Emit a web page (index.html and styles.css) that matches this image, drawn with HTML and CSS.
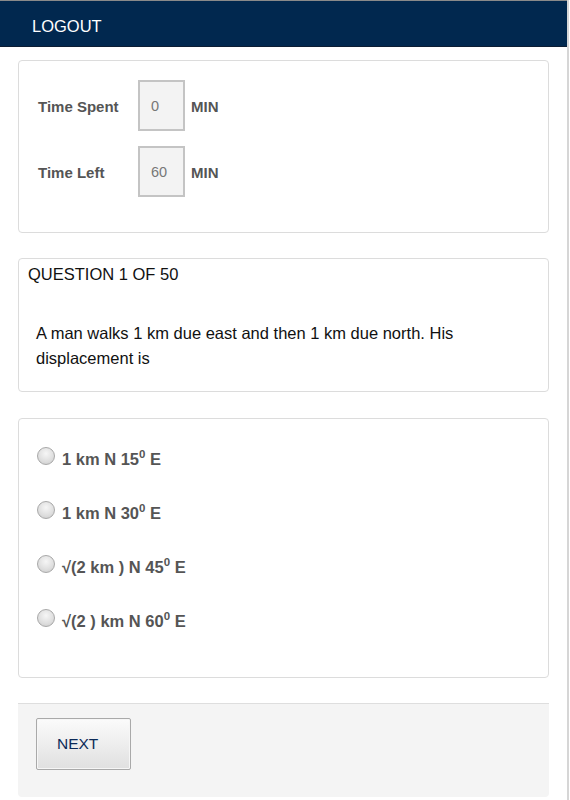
FILE: index.html
```html
<!DOCTYPE html>
<html>
<head>
<meta charset="utf-8">
<link rel="stylesheet" href="styles.css">
</head>
<body>
<div class="page">
  <header class="topbar">LOGOUT</header>

  <section class="card timer">
    <div class="timer-row">
      <span class="timer-label">Time Spent</span>
      <span class="timer-box">0</span>
      <span class="timer-unit">MIN</span>
    </div>
    <div class="timer-row">
      <span class="timer-label">Time Left</span>
      <span class="timer-box">60</span>
      <span class="timer-unit">MIN</span>
    </div>
  </section>

  <section class="card question">
    <div class="q-head">QUESTION 1 OF 50</div>
    <p class="q-text">A man walks 1 km due east and then 1 km due north. His displacement is</p>
  </section>

  <section class="card options">
    <label class="option"><input type="radio" name="ans" class="radio"><span>1 km N 15<sup>0</sup> E</span></label>
    <label class="option"><input type="radio" name="ans" class="radio"><span>1 km N 30<sup>0</sup> E</span></label>
    <label class="option"><input type="radio" name="ans" class="radio"><span>√(2 km ) N 45<sup>0</sup> E</span></label>
    <label class="option"><input type="radio" name="ans" class="radio"><span>√(2 ) km N 60<sup>0</sup> E</span></label>
  </section>

  <footer class="card-footer">
    <button class="next-btn">NEXT</button>
  </footer>
</div>
</body>
</html>
```

FILE: styles.css
```css
html, body {
  margin: 0;
  padding: 0;
  background: #fff;
}

body {
  font-family: "Liberation Sans", Arial, sans-serif;
  width: 570px;
}

.page {
  width: 567px;
  min-height: 800px;
  border-right: 2px solid #d6d6d6;
  box-sizing: content-box;
}

.topbar {
  background: #01284f;
  color: #fff;
  font-size: 16.5px;
  height: 45px;
  line-height: 50px;
  border-top: 1px solid #8a8a8a;
  padding-left: 32px;
  border-bottom: 1px solid #0c1d33;
}

.card {
  margin: 0 18px;
  border: 1px solid #dcdcdc;
  border-radius: 4px;
  background: #fff;
}

.timer {
  margin-top: 13px;
  padding: 19px 19px 34px;
  display: flex;
  flex-direction: column;
  gap: 15px;
  height: 118px;
}

.timer-row {
  display: flex;
  align-items: center;
}

.timer-label {
  width: 100px;
  font-size: 15px;
  font-weight: bold;
  color: #555;
  padding-top: 2px;
}

.timer-box {
  width: 47px;
  height: 51px;
  box-sizing: border-box;
  border: 2px solid #c4c4c4;
  background: #f3f3f3;
  color: #777;
  font-size: 14.5px;
  line-height: 49px;
  padding-left: 11px;
}

.timer-unit {
  margin-left: 6px;
  font-size: 15px;
  font-weight: bold;
  color: #555;
  padding-top: 2px;
}

.question {
  margin-top: 25px;
  padding: 5px 17px 21px 9px;
  height: 106px;
}

.q-head {
  font-size: 16.5px;
  line-height: 20px;
  color: #111;
}

.q-text {
  margin: 37px 0 0 8px;
  font-size: 16.5px;
  line-height: 25px;
  color: #111;
}

.options {
  margin-top: 26px;
  padding: 28px 18px 0;
  height: 230px;
  display: flex;
  flex-direction: column;
  gap: 30px;
}

.option {
  display: flex;
  align-items: center;
  height: 24px;
  font-size: 16.5px;
  font-weight: bold;
  color: #555;
}

.option sup {
  font-size: 11.5px;
  line-height: 0;
  vertical-align: 7px;
}

.radio {
  appearance: none;
  -webkit-appearance: none;
  margin: 0 7px 6px 0;
  width: 18px;
  height: 18px;
  border-radius: 50%;
  border: 1px solid #a8a8a8;
  background: radial-gradient(circle at 50% 35%, #f6f6f6 0%, #dedede 60%, #c8c8c8 100%);
  box-sizing: border-box;
  flex: none;
}

.card-footer {
  margin: 25px 18px 0;
  border-top: 1px solid #dedede;
  background: #f4f4f4;
  border-radius: 0 0 4px 4px;
  padding: 14px 18px 27px;
}

.next-btn {
  width: 95px;
  height: 52px;
  border: 1px solid #a9a9a9;
  border-radius: 2px;
  background: linear-gradient(#fbfbfb, #e0e0e0);
  color: #0b2a58;
  font-family: "Liberation Sans", Arial, sans-serif;
  font-size: 15.5px;
  text-align: left;
  padding: 0 0 0 20px;
  box-shadow: inset 0 0 0 1px #f6f6f6;
}
```
